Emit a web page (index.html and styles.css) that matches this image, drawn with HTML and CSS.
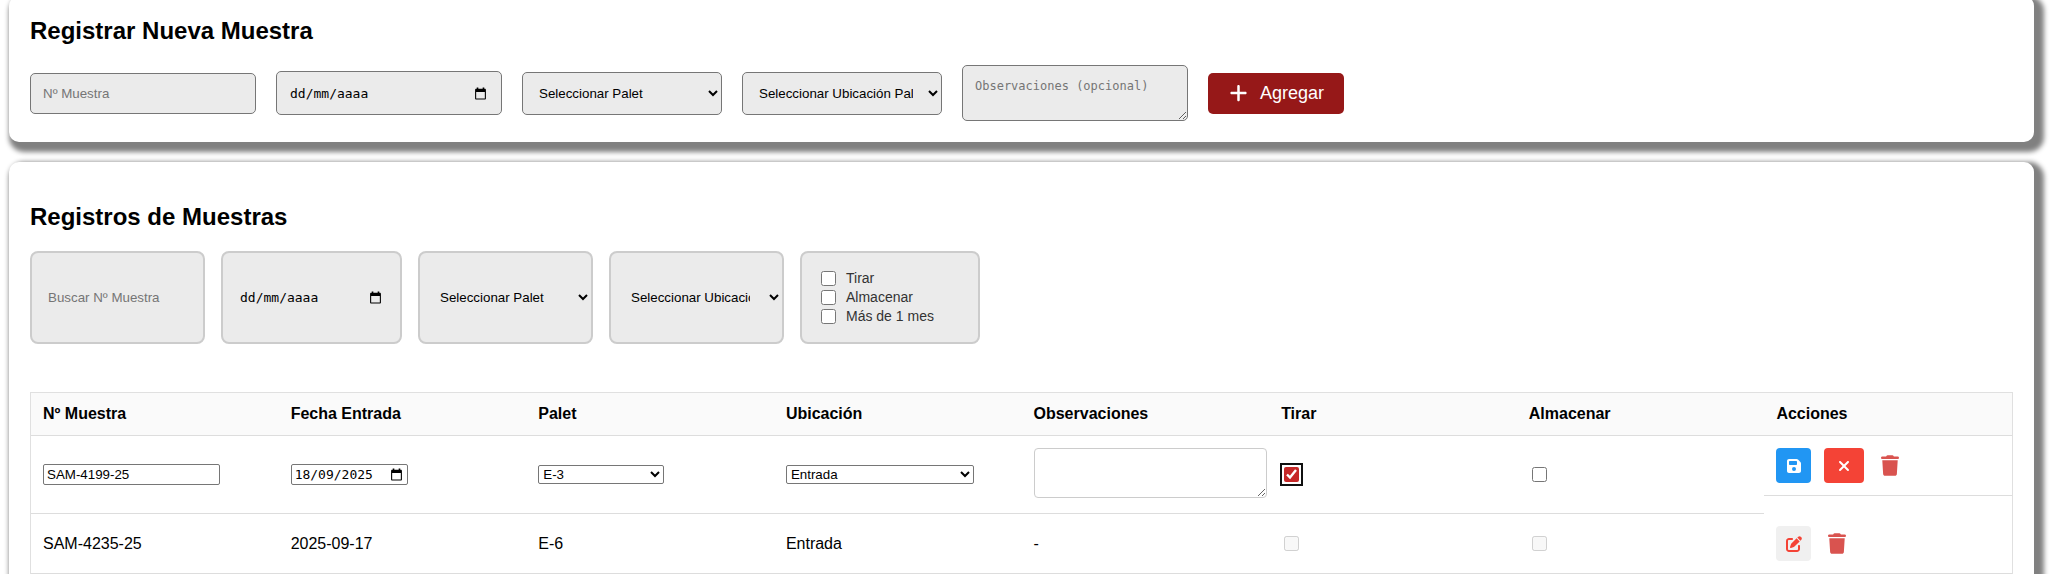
FILE: index.html
```html
<!DOCTYPE html>
<html lang="es">
<head>
    <meta charset="UTF-8">
    <meta name="viewport" content="width=device-width, initial-scale=1.0">
    <title>Muestras</title>
    <link rel="stylesheet" href="styles.css">
</head>
<body>
    <!-- Iconos -->
    <svg class="icon-defs" aria-hidden="true">
        <symbol id="icon-plus" viewBox="0 0 448 512"><path d="M256 80c0-17.7-14.3-32-32-32s-32 14.3-32 32V224H48c-17.7 0-32 14.3-32 32s14.3 32 32 32H192V432c0 17.7 14.3 32 32 32s32-14.3 32-32V288H400c17.7 0 32-14.3 32-32s-14.3-32-32-32H256V80z"/></symbol>
        <symbol id="icon-save" viewBox="0 0 448 512"><path d="M64 32C28.7 32 0 60.7 0 96V416c0 35.3 28.7 64 64 64H384c35.3 0 64-28.7 64-64V173.3c0-17-6.7-33.3-18.7-45.3L352 50.7C340 38.7 323.7 32 306.7 32H64zm0 96c0-17.7 14.3-32 32-32H288c17.7 0 32 14.3 32 32v64c0 17.7-14.3 32-32 32H96c-17.7 0-32-14.3-32-32V128zM224 288a64 64 0 1 1 0 128 64 64 0 1 1 0-128z"/></symbol>
        <symbol id="icon-close" viewBox="0 0 384 512"><path d="M342.6 150.6c12.5-12.5 12.5-32.8 0-45.3s-32.8-12.5-45.3 0L192 210.7 86.6 105.4c-12.5-12.5-32.8-12.5-45.3 0s-12.5 32.8 0 45.3L146.7 256 41.4 361.4c-12.5 12.5-12.5 32.8 0 45.3s32.8 12.5 45.3 0L192 301.3 297.4 406.6c12.5 12.5 32.8 12.5 45.3 0s12.5-32.8 0-45.3L237.3 256 342.6 150.6z"/></symbol>
        <symbol id="icon-edit" viewBox="0 0 512 512"><path d="M471.6 21.7c-21.9-21.9-57.3-21.9-79.2 0L362.3 51.7l97.9 97.9 30.1-30.1c21.9-21.9 21.9-57.3 0-79.2L471.6 21.7zm-299.2 220c-6.1 6.1-10.8 13.6-13.5 21.9l-29.6 88.8c-2.9 8.6-.6 18.1 5.8 24.6s15.9 8.7 24.6 5.8l88.8-29.6c8.2-2.7 15.7-7.4 21.9-13.5L437.7 172.3 339.7 74.3 172.4 241.7zM96 64C43 64 0 107 0 160V416c0 53 43 96 96 96H352c53 0 96-43 96-96V320c0-17.7-14.3-32-32-32s-32 14.3-32 32v96c0 17.7-14.3 32-32 32H96c-17.7 0-32-14.3-32-32V160c0-17.7 14.3-32 32-32h96c17.7 0 32-14.3 32-32s-14.3-32-32-32H96z"/></symbol>
        <symbol id="icon-trash" viewBox="0 0 448 512"><path d="M135.2 17.7L128 32H32C14.3 32 0 46.3 0 64S14.3 96 32 96H416c17.7 0 32-14.3 32-32s-14.3-32-32-32H320l-7.2-14.3C307.4 6.8 296.3 0 284.2 0H163.8c-12.1 0-23.2 6.8-28.6 17.7zM416 128H32L53.2 467c1.6 25.3 22.6 45 47.9 45H346.9c25.3 0 46.3-19.7 47.9-45L416 128z"/></symbol>
        <symbol id="icon-calendar" viewBox="0 0 24 24"><path d="M20 3h-1V1h-3v2H8V1H5v2H4c-1.100 0-2 .9-2 2v16c0 1.100.9 2 2 2h16c1.100 0 2-.9 2-2V5c0-1.100-.9-2-2-2zm0 18H4V9h16v12z"/></symbol>
    </svg>

    <main class="page">
        <!-- Formulario de alta -->
        <section class="card">
            <h2>Registrar Nueva Muestra</h2>
            <form class="sample-form">
                <input type="text" class="field" placeholder="Nº Muestra" aria-label="Nº Muestra">
                <div class="field date-field">
                    <input type="text" placeholder="dd/mm/aaaa" aria-label="Fecha de entrada">
                    <svg class="icon-calendar"><use href="#icon-calendar"/></svg>
                </div>
                <select class="field" aria-label="Palet">
                    <option>Seleccionar Palet</option>
                </select>
                <select class="field" aria-label="Ubicación">
                    <option>Seleccionar Ubicación Palet</option>
                </select>
                <textarea class="field" rows="2" placeholder="Observaciones (opcional)" aria-label="Observaciones"></textarea>
                <button type="button" class="btn-add">
                    <svg class="icon-plus"><use href="#icon-plus"/></svg>
                    Agregar
                </button>
            </form>
        </section>

        <!-- Listado -->
        <section class="card records">
            <h2>Registros de Muestras</h2>
            <div class="filters">
                <input type="text" class="filter" placeholder="Buscar Nº Muestra" aria-label="Buscar Nº Muestra">
                <div class="filter date-field">
                    <input type="text" placeholder="dd/mm/aaaa" aria-label="Filtrar por fecha">
                    <svg class="icon-calendar"><use href="#icon-calendar"/></svg>
                </div>
                <select class="filter" aria-label="Filtrar por palet">
                    <option>Seleccionar Palet</option>
                </select>
                <select class="filter" aria-label="Filtrar por ubicación">
                    <option>Seleccionar Ubicación</option>
                </select>
                <div class="filter filter-checks">
                    <label><input type="checkbox"> Tirar</label>
                    <label><input type="checkbox"> Almacenar</label>
                    <label><input type="checkbox"> Más de 1 mes</label>
                </div>
            </div>

            <table class="samples">
                <thead>
                    <tr>
                        <th>Nº Muestra</th>
                        <th>Fecha Entrada</th>
                        <th>Palet</th>
                        <th>Ubicación</th>
                        <th>Observaciones</th>
                        <th>Tirar</th>
                        <th>Almacenar</th>
                        <th>Acciones</th>
                    </tr>
                </thead>
                <tbody>
                    <tr>
                        <td><input type="text" class="edit-number" value="SAM-4199-25" aria-label="Nº Muestra"></td>
                        <td>
                            <div class="edit-date date-field">
                                <input type="text" value="18/09/2025" aria-label="Fecha Entrada">
                                <svg class="icon-calendar"><use href="#icon-calendar"/></svg>
                            </div>
                        </td>
                        <td>
                            <select class="edit-palet" aria-label="Palet">
                                <option>E-3</option>
                                <option>E-6</option>
                            </select>
                        </td>
                        <td>
                            <select class="edit-location" aria-label="Ubicación">
                                <option>Entrada</option>
                            </select>
                        </td>
                        <td><textarea class="edit-notes" aria-label="Observaciones"></textarea></td>
                        <td><input type="checkbox" class="focused" checked aria-label="Tirar"></td>
                        <td><input type="checkbox" aria-label="Almacenar"></td>
                        <td class="actions">
                            <button type="button" class="btn btn-save" aria-label="Guardar"><svg><use href="#icon-save"/></svg></button>
                            <button type="button" class="btn btn-cancel" aria-label="Cancelar"><svg><use href="#icon-close"/></svg></button>
                            <button type="button" class="btn-delete" aria-label="Eliminar"><svg><use href="#icon-trash"/></svg></button>
                        </td>
                    </tr>
                    <tr>
                        <td>SAM-4235-25</td>
                        <td>2025-09-17</td>
                        <td>E-6</td>
                        <td>Entrada</td>
                        <td>-</td>
                        <td><input type="checkbox" disabled aria-label="Tirar"></td>
                        <td><input type="checkbox" disabled aria-label="Almacenar"></td>
                        <td class="actions">
                            <button type="button" class="btn btn-edit" aria-label="Editar"><svg><use href="#icon-edit"/></svg></button>
                            <button type="button" class="btn-delete" aria-label="Eliminar"><svg><use href="#icon-trash"/></svg></button>
                        </td>
                    </tr>
                </tbody>
            </table>
        </section>
    </main>
</body>
</html>
```
FILE: styles.css
```css
body {
    margin: 0;
    background-color: #fff;
    color: #000;
    font-family: "Liberation Sans", Arial, sans-serif;
    font-size: 16px;
}
svg {
    display: block;
    fill: currentColor;
}
.icon-defs {
    display: none;
}
.page {
    display: flex;
    flex-direction: column;
    gap: 20px;
    box-sizing: border-box;
    height: 100vh;
    padding: 0 19px 0 9px;
    overflow: hidden;
}
.card {
    padding: 21px;
    background-color: #fff;
    border-radius: 10px;
    box-shadow: 5px 5px 5px 5px gray;
}
.card:first-child {
    margin-top: -4px;
}
.records {
    flex: 1 0 auto;
}
h2 {
    margin: 0 0 20px;
    font-size: 24px;
    line-height: 28px;
}
.records h2 {
    margin-top: 20px;
}
input[type="checkbox"] {
    width: 15px;
    height: 15px;
    accent-color: #c62828;
}

/* Campo de fecha */
.date-field {
    display: flex;
    align-items: center;
    justify-content: space-between;
}
.date-field input {
    width: 84px;
    padding: 0 1px;
    border: none;
    background: none;
    color: #000;
    font-family: "DejaVu Sans Mono", monospace;
    font-size: 13px;
}
.date-field input::placeholder {
    color: #000;
}
.icon-calendar {
    width: 13px;
    height: 13px;
    margin-right: 2px;
}

/* Formulario */
.sample-form {
    display: flex;
    align-items: center;
    gap: 20px;
}
.field {
    width: 200px;
    padding: 12px;
    border: 1px solid #767676;
    border-radius: 5px;
    background-color: #ebebeb;
}
.field.date-field {
    height: 18px;
}
textarea.field {
    height: 30px;
    font-family: "DejaVu Sans Mono", monospace;
    font-size: 12px;
    line-height: 16px;
}
.btn-add {
    display: flex;
    align-items: center;
    gap: 11px;
    padding: 10px 20px;
    border: none;
    border-radius: 5px;
    background-color: #961818;
    color: #fff;
    font-family: inherit;
    font-size: 18px;
    cursor: pointer;
}
.icon-plus {
    width: 21px;
    height: 20px;
}

/* Filtros */
.filters {
    display: flex;
    gap: 16px;
    margin-bottom: 48px;
}
.filter {
    box-sizing: border-box;
    width: 175px;
    height: 93px;
    padding: 16px;
    border: 2px solid #ccc;
    border-radius: 8px;
    background-color: #ebebeb;
}
.filter.date-field {
    width: 181px;
}
.filter-checks {
    display: flex;
    flex-direction: column;
    justify-content: center;
    width: 180px;
    color: #333;
    font-size: 14px;
    line-height: 19px;
}
.filter-checks label {
    display: flex;
    align-items: center;
    gap: 10px;
}
.filter-checks input {
    margin: 0 0 0 3px;
}

/* Tabla */
.samples {
    width: 100%;
    table-layout: fixed;
    border: 1px solid #e0e0e0;
    border-spacing: 0;
}
.samples th,
.samples td {
    padding: 12px;
    border-bottom: 1px solid #ddd;
    text-align: left;
}
.samples th {
    background-color: #fafafa;
}
.samples td input[type="checkbox"] {
    display: block;
    margin: 0 3px;
}
.focused {
    outline: 2px solid #101010;
    outline-offset: 2px;
    border-radius: 3px;
}
.edit-number,
.edit-date,
.edit-palet,
.edit-location {
    display: block;
    box-sizing: border-box;
    border: 1px solid #767676;
    border-radius: 2px;
    background-color: #fff;
}
.edit-number {
    width: 177px;
    height: 21px;
    padding: 1px 3px;
}
.edit-date {
    display: flex;
    width: 117px;
    height: 21px;
    padding: 0 2px;
}
.edit-palet {
    width: 126px;
}
.edit-location {
    width: 188px;
}
.edit-notes {
    display: block;
    width: 100%;
    height: 40px;
    margin-bottom: 3px;
    padding: 4px;
    border: 1px solid #ccc;
    border-radius: 4px;
}
.samples .actions {
    display: flex;
    align-items: center;
    gap: 13px;
}
.btn {
    display: flex;
    align-items: center;
    justify-content: center;
    width: 35px;
    height: 35px;
    padding: 0;
    border: none;
    border-radius: 4px;
    color: #fff;
    cursor: pointer;
}
.btn svg {
    width: 16px;
    height: 16px;
}
.btn-save {
    background-color: #2196f3;
}
.btn-cancel {
    width: 40px;
    background-color: #f44336;
}
.btn-edit {
    background-color: #f0f0f0;
    color: #f44336;
}
.btn-delete {
    padding: 0 4px;
    border: none;
    background: none;
    color: #d9534f;
    cursor: pointer;
}
.btn-delete svg {
    width: 18px;
    height: 21px;
}
```
